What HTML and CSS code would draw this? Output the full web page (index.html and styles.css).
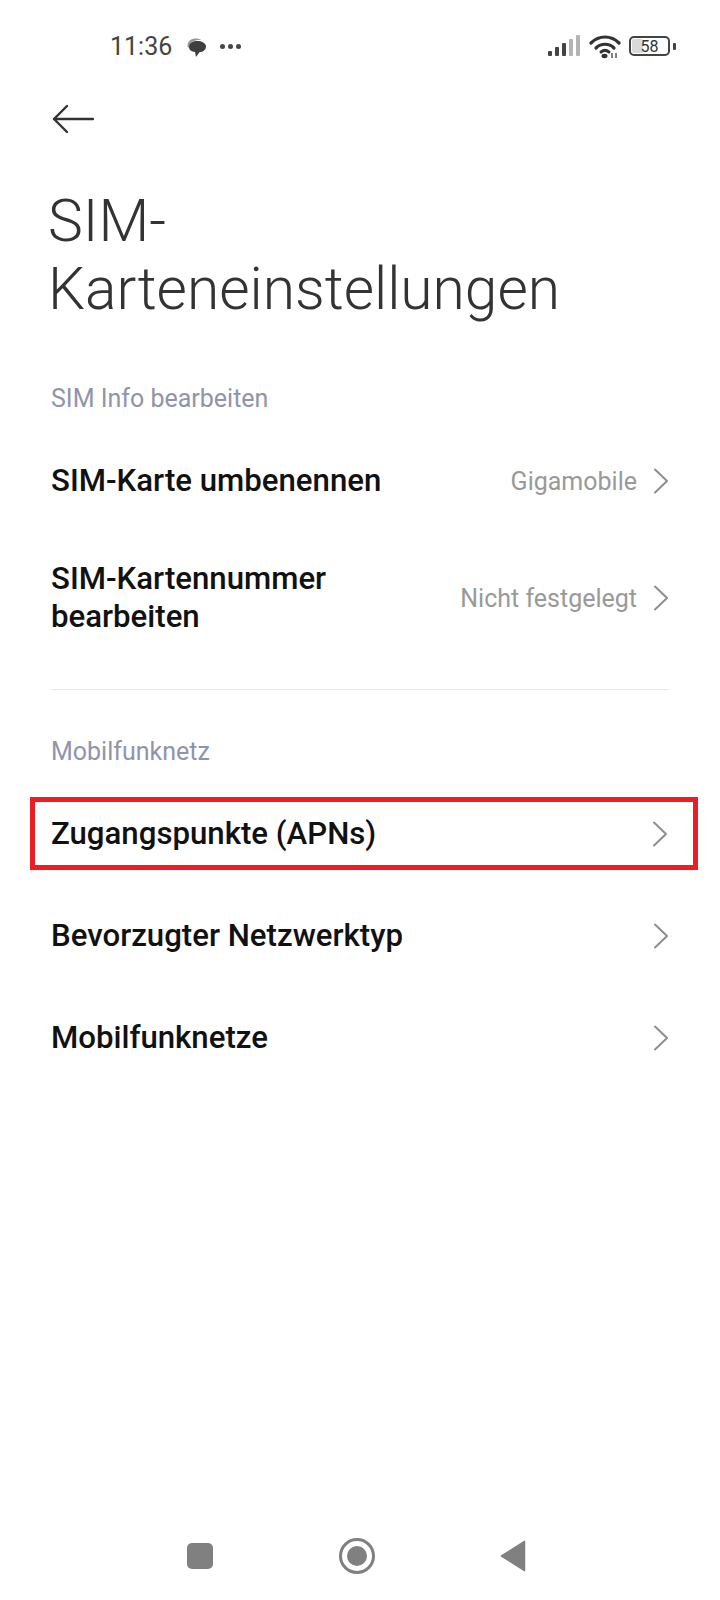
FILE: index.html
```html
<!DOCTYPE html>
<html>
<head>
  <title>SIM-Karteneinstellungen</title>
  <link rel="stylesheet" href="styles.css">
</head>
<body>
  <div class="statusbar">
    <div class="status-left">
      <span class="time">11:36</span>
      <svg class="msg-icon" width="20" height="20" viewBox="0 0 20 20">
        <path d="M.5 8C.5 3 4 .5 9 .5c2 0 4 .5 5 1.500C8 1.500 3 4 1.500 10c-.7-.5-1-1-1-2z" fill="#999"/>
        <path d="M2 9c0-3.500 3.500-6 8-6s9 2 9 5.500-3 5.500-6.500 5.700L9 19l-1-5C4.500 13.500 2 12 2 9z" fill="#3f3f3f"/>
      </svg>
      <span class="dots"><i></i><i></i><i></i></span>
    </div>
    <div class="status-right">
      <svg width="34" height="24" viewBox="0 0 34 24">
        <rect x="1" y="17" width="4" height="5" rx="1" fill="#444"/>
        <rect x="8" y="13" width="4" height="9" rx="1" fill="#444"/>
        <rect x="15" y="9" width="4" height="13" rx="1" fill="#444"/>
        <rect x="22" y="5" width="4" height="17" rx="1" fill="#b4b4b4"/>
        <rect x="29" y="1" width="4" height="21" rx="1" fill="#b4b4b4"/>
      </svg>
      <svg class="wifi" width="32" height="26" viewBox="0 0 32 26">
        <path d="M2 10C10 2 22 2 30 10" fill="none" stroke="#333" stroke-width="3.200" stroke-linecap="round"/>
        <path d="M7 15c5-5 13-5 18 0" fill="none" stroke="#333" stroke-width="3.200" stroke-linecap="round"/>
        <path d="M12 19c2.500-2 5.500-2 8 0" fill="none" stroke="#333" stroke-width="3" stroke-linecap="round"/>
        <ellipse cx="15.500" cy="23" rx="3" ry="2.200" fill="#333"/>
        <path d="M23 20v5M27 20v5" stroke="#555" stroke-width="1.500"/>
      </svg>
      <div class="battery">
        <div class="battery-body">
          <div class="battery-level"></div>
          <span class="battery-text">58</span>
        </div>
        <div class="battery-tip"></div>
      </div>
    </div>
  </div>

  <div class="header">
    <svg width="42" height="30" viewBox="0 0 42 30">
      <path d="M41 15H2M15 2L2 15l13 13" fill="none" stroke="#333" stroke-width="2.400" stroke-linecap="round" stroke-linejoin="round"/>
    </svg>
  </div>

  <h1 class="title">SIM-<br>Karteneinstellungen</h1>

  <div class="section section-first">
    <div class="section-title">SIM Info bearbeiten</div>
    <div class="row row-first">
      <div class="row-label">SIM-Karte umbenennen</div>
      <div class="row-value">Gigamobile</div>
      <svg class="chevron" width="16" height="26" viewBox="0 0 16 26"><path d="M2 1.500L14 13 2 24.500" /></svg>
    </div>
    <div class="row row-tall">
      <div class="row-label">SIM-Kartennummer<br>bearbeiten</div>
      <div class="row-value">Nicht festgelegt</div>
      <svg class="chevron" width="16" height="26" viewBox="0 0 16 26"><path d="M2 1.500L14 13 2 24.500" /></svg>
    </div>
  </div>

  <div class="divider"></div>

  <div class="section">
    <div class="section-title">Mobilfunknetz</div>
    <div class="row row-marked">
      <div class="row-label">Zugangspunkte (APNs)</div>
      <svg class="chevron" width="16" height="26" viewBox="0 0 16 26"><path d="M2 1.500L14 13 2 24.500" /></svg>
    </div>
    <div class="row">
      <div class="row-label">Bevorzugter Netzwerktyp</div>
      <svg class="chevron" width="16" height="26" viewBox="0 0 16 26"><path d="M2 1.500L14 13 2 24.500" /></svg>
    </div>
    <div class="row">
      <div class="row-label">Mobilfunknetze</div>
      <svg class="chevron" width="16" height="26" viewBox="0 0 16 26"><path d="M2 1.500L14 13 2 24.500" /></svg>
    </div>
  </div>

  <div class="navbar">
    <div class="nav-square"></div>
    <div class="nav-circle"><div class="nav-dot"></div></div>
    <svg width="26" height="32" viewBox="0 0 26 32"><path d="M24.500 1.500v29L1.500 16z" fill="#808080" stroke="#808080" stroke-width="1.500" stroke-linejoin="round"/></svg>
  </div>
</body>
</html>
```

FILE: styles.css
```css
* {
  box-sizing: border-box;
}

body {
  margin: 0;
  width: 720px;
  height: 1600px;
  background: #fff;
  font-family: Roboto, sans-serif;
  color: #111;
  display: flex;
  flex-direction: column;
}

.statusbar {
  height: 48px;
  margin-top: 22px;
  padding: 0 44px 0 110px;
  display: flex;
  justify-content: space-between;
  align-items: center;
}

.status-left,
.status-right {
  display: flex;
  align-items: center;
}

.time {
  font-size: 25px;
  color: #444;
}

.msg-icon {
  margin: 3px 0 0 15px;
}

.dots {
  display: flex;
  gap: 3px;
  margin-left: 13px;
}

.dots i {
  width: 5px;
  height: 5px;
  border-radius: 50%;
  background: #444;
}

.wifi {
  margin-left: 8px;
}

.battery {
  display: flex;
  align-items: center;
  margin-left: 8px;
}

.battery-body {
  width: 41px;
  height: 20px;
  border: 2px solid #444;
  border-radius: 5px;
  position: relative;
  display: flex;
  align-items: center;
  justify-content: center;
}

.battery-level {
  position: absolute;
  left: 1px;
  top: 1px;
  bottom: 1px;
  width: 11px;
  background: #d9d9d9;
  border-radius: 2px;
}

.battery-text {
  position: relative;
  font-size: 16px;
  color: #333;
}

.battery-tip {
  width: 3px;
  height: 7px;
  margin-left: 3px;
  background: #444;
  border-radius: 1px;
}

.header {
  height: 30px;
  margin-top: 34px;
  padding-left: 52px;
}

.title {
  margin: 53px 0 0 48px;
  font-size: 58.700px;
  line-height: 68px;
  font-weight: 300;
  color: #333;
}

.section-title {
  margin: 0 0 0 51px;
  font-size: 25px;
  line-height: 30px;
  color: #9094ab;
}

.section {
  margin-top: 47px;
}

.section-first {
  margin-top: 61px;
}

.row {
  display: flex;
  align-items: center;
  height: 102px;
  padding: 0 51px;
}

.row-first {
  margin-top: 16px;
}

.row-tall {
  height: 116px;
  margin-top: 8px;
}

.row-label {
  flex: 1;
  font-size: 31.200px;
  line-height: 38px;
  font-weight: 500;
  color: #111;
}

.row-value {
  font-size: 25px;
  color: #999;
  margin-right: 16px;
}

.chevron {
  flex: none;
}

.chevron path {
  fill: none;
  stroke: #8e8e8e;
  stroke-width: 2;
  stroke-linecap: round;
  stroke-linejoin: round;
}

.divider {
  height: 1px;
  margin: 33px 51px 0;
  background: #e6e6e6;
}

.row-marked {
  height: 73px;
  margin: 30px 22px 15px 30px;
  padding: 0 25px 0 16px;
  border: 5px solid #ee1c25;
}

.navbar {
  margin-top: auto;
  height: 88px;
  padding: 0 194px 0 187px;
  display: flex;
  align-items: center;
  justify-content: space-between;
}

.nav-square {
  width: 26px;
  height: 26px;
  background: #808080;
  border-radius: 5px;
}

.nav-circle {
  width: 36px;
  height: 36px;
  border: 3px solid #808080;
  border-radius: 50%;
  display: flex;
  align-items: center;
  justify-content: center;
}

.nav-dot {
  width: 20px;
  height: 20px;
  background: #808080;
  border-radius: 50%;
}
```
